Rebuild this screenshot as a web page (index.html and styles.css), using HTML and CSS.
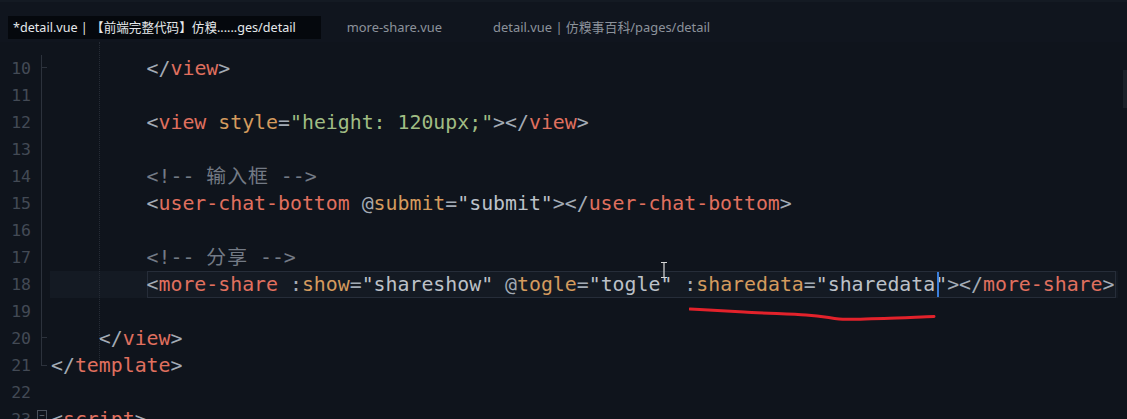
FILE: index.html
```html
<!DOCTYPE html>
<html lang="en">
<head>
    <meta charset="UTF-8" />
    <meta name="viewport" content="width=device-width, initial-scale=1.0" />
    <title>detail.vue</title>
    <link rel="stylesheet" href="styles.css">
</head>

<body>
    <div class="tabs">
        <div class="tab active">*detail.vue | 【前端完整代码】仿糗......ges/detail</div>
        <div class="tab">more-share.vue</div>
        <div class="tab">detail.vue | 仿糗事百科/pages/detail</div>
    </div>

    <div class="editor">
        <!-- overlays -->
        <div class="guide"></div>
        <div class="scroll-thumb"></div>
        <div class="caret"></div>
        <svg class="ibeam" width="8" height="16" viewBox="0 0 8 16">
            <path d="M1 0.5 H7 M4 0.5 V15.5 M1 15.5 H7" stroke="#d8d8d8" stroke-width="1.2" fill="none" />
        </svg>
        <svg class="squiggle" width="250" height="16" viewBox="0 0 250 16">
            <path d="M1 2 C 20 3, 40 4, 55 5 S 100 7, 117 8 S 140 11, 150 12 S 180 11.5, 195 11.5 S 230 10, 245 9.5" stroke="#e3222b" stroke-width="3" fill="none" stroke-linecap="round" />
        </svg>

        <div class="line fold-tick"><span class="num">10</span><span class="fold"></span><span class="code">        <span class="p">&lt;/</span><span class="t">view</span><span class="p">&gt;</span></span></div>
        <div class="line"><span class="num">11</span><span class="fold"></span><span class="code"></span></div>
        <div class="line"><span class="num">12</span><span class="fold"></span><span class="code">        <span class="p">&lt;</span><span class="t">view</span> <span class="a">style</span><span class="p">=</span><span class="s">"height: 120upx;"</span><span class="p">&gt;&lt;/</span><span class="t">view</span><span class="p">&gt;</span></span></div>
        <div class="line"><span class="num">13</span><span class="fold"></span><span class="code"></span></div>
        <div class="line"><span class="num">14</span><span class="fold"></span><span class="code">        <span class="c">&lt;!-- <span class="cjk">输入框</span> --&gt;</span></span></div>
        <div class="line"><span class="num">15</span><span class="fold"></span><span class="code">        <span class="p">&lt;</span><span class="t">user-chat-bottom</span> <span class="p">@</span><span class="a">submit</span><span class="p">=</span><span class="v">"submit"</span><span class="p">&gt;&lt;/</span><span class="t">user-chat-bottom</span><span class="p">&gt;</span></span></div>
        <div class="line"><span class="num">16</span><span class="fold"></span><span class="code"></span></div>
        <div class="line"><span class="num">17</span><span class="fold"></span><span class="code">        <span class="c">&lt;!-- <span class="cjk">分享</span> --&gt;</span></span></div>
        <div class="line current"><span class="num">18</span><span class="fold"></span><span class="code">        <span class="sel"><span class="p">&lt;</span><span class="t">more-share</span> <span class="p">:</span><span class="a">show</span><span class="p">=</span><span class="v">"shareshow"</span> <span class="p">@</span><span class="a">togle</span><span class="p">=</span><span class="v">"togle"</span> <span class="p">:</span><span class="a">sharedata</span><span class="p">=</span><span class="v">"sharedata"</span><span class="p">&gt;&lt;/</span><span class="t">more-share</span><span class="p">&gt;</span></span></span></div>
        <div class="line"><span class="num">19</span><span class="fold"></span><span class="code"></span></div>
        <div class="line fold-tick"><span class="num">20</span><span class="fold"></span><span class="code">    <span class="p">&lt;/</span><span class="t">view</span><span class="p">&gt;</span></span></div>
        <div class="line fold-end"><span class="num">21</span><span class="fold"></span><span class="code"><span class="p">&lt;/</span><span class="t">template</span><span class="p">&gt;</span></span></div>
        <div class="line no-fold"><span class="num">22</span><span class="fold"></span><span class="code"></span></div>
        <div class="line fold-box"><span class="num">23</span><span class="fold"><span class="box">−</span></span><span class="code"><span class="p">&lt;</span><span class="t">script</span><span class="p">&gt;</span></span></div>
    </div>
</body>
</html>
```

FILE: styles.css
```css
body {
    margin: 0;
    height: 419px;
    overflow: hidden;
    background: #0f141c;
    font-family: "Noto Sans", "Noto Sans CJK SC", sans-serif;
}

.tabs {
    display: flex;
    align-items: center;
    height: 42px;
    padding: 10px 0 0 8px;
    background: #10151e;
    border-top: 2px solid #141a23;
    box-sizing: border-box;
}

.tab {
    font-size: 12.9px;
    color: #8c929b;
    padding: 0 25px 0 26px;
    line-height: 23px;
}

    .tab.active {
        font-size: 12.6px;
        background: #05080d;
        color: #e6e8eb;
        padding: 0 25px 0 5px;
    }

.editor {
    position: relative;
    padding-top: 13px;
    font-family: "DejaVu Sans Mono", "Noto Sans CJK SC", monospace;
}

.line {
    display: flex;
    height: 27px;
    line-height: 27px;
}

.num {
    width: 31px;
    text-align: right;
    font-size: 16.5px;
    color: #434a55;
}

.fold {
    position: relative;
    width: 21px;
    margin-left: 10px;
    border-left: 1px solid #2c323c;
    box-sizing: border-box;
}

.fold-tick .fold::after {
    content: "";
    position: absolute;
    left: 0;
    top: 12px;
    width: 5px;
    border-top: 1px solid #2c323c;
}

.fold-end .fold {
    border-left: none;
}

    .fold-end .fold::after {
        content: "";
        position: absolute;
        left: 0;
        top: 0;
        width: 5px;
        height: 13px;
        border-left: 1px solid #2c323c;
        border-bottom: 1px solid #2c323c;
    }

.no-fold .fold,
.fold-box .fold {
    border-left: none;
}

.box {
    position: absolute;
    left: -4px;
    top: 4px;
    width: 8px;
    height: 8px;
    border: 1px solid #4a515c;
    font-size: 9px;
    line-height: 8px;
    text-align: center;
    color: #6a717c;
}

.code {
    margin-left: -11px;
    white-space: pre;
    font-size: 19.85px;
    color: #a3abb5;
}

.current {
    background: linear-gradient(to right, transparent 50px, #141a23 50px, #141a23 1118px, transparent 1118px);
}

.sel {
    display: inline-block;
    height: 27px;
    padding-right: 2px;
    box-shadow: inset 0 0 0 1px #262d39;
    vertical-align: top;
}

.p { color: #a3abb5; }
.t { color: #e0705f; }
.a { color: #d49b5e; }
.s { color: #a0bd84; }
.v { color: #bcc1c8; }
.c { color: #737a85; }

.cjk {
    letter-spacing: 1px;
}

.guide {
    position: absolute;
    left: 99px;
    top: 0;
    height: 322px;
    border-left: 1px dotted #262c36;
}

.scroll-thumb {
    position: absolute;
    right: 0;
    top: 28px;
    width: 4px;
    height: 38px;
    background: #1b2129;
}

.caret {
    position: absolute;
    left: 937px;
    top: 230px;
    width: 2px;
    height: 25px;
    background: #3b7fdc;
}

.ibeam {
    position: absolute;
    left: 660px;
    top: 220px;
}

.squiggle {
    position: absolute;
    left: 689px;
    top: 265px;
}
```
